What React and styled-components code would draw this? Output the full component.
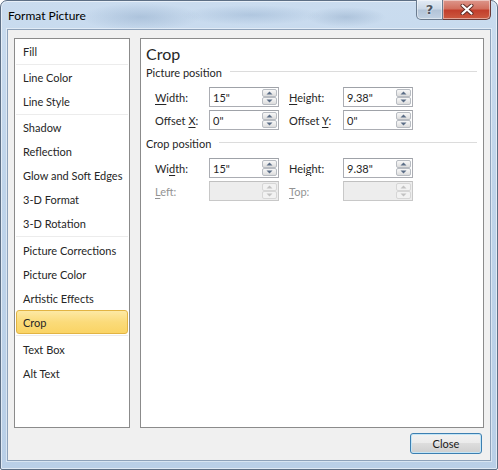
import styled, { createGlobalStyle } from 'styled-components';

const GlobalStyle = createGlobalStyle`
  html, body {
    margin: 0;
    padding: 0;
  }
  body {
    width: 498px;
    height: 470px;
    overflow: hidden;
    background: #fff;
    font-family: Lato, "Liberation Sans", sans-serif;
    font-size: 11px;
    color: #262626;
  }
`;

const Window = styled.div`
  box-sizing: border-box;
  width: 498px;
  height: 470px;
  display: flex;
  flex-direction: column;
  padding: 0 6px 8px 6px;
  border: 1px solid #5d6f85;
  border-radius: 7px 7px 2px 2px;
  background:
    radial-gradient(ellipse 60px 14px at 140px 16px, rgba(120, 150, 185, 0.35), transparent),
    radial-gradient(ellipse 70px 10px at 250px 14px, rgba(130, 160, 195, 0.35), transparent),
    radial-gradient(ellipse 40px 10px at 345px 16px, rgba(110, 140, 175, 0.3), transparent),
    linear-gradient(to bottom, #cadcef 0%, #bfd4ea 40%, #b9cfe7 100%);
  box-shadow: inset 0 0 0 1px rgba(255, 255, 255, 0.55);
`;

const TitleBar = styled.div`
  height: 28px;
  display: flex;
  align-items: flex-start;
  flex: none;
`;

const Title = styled.div`
  padding: 7px 0 0 1px;
  line-height: 16px;
  font-size: 12px;
  color: #000;
  flex: 1;
`;

const CaptionButtons = styled.div`
  display: flex;
  margin-top: -1px;
`;

const CaptionButton = styled.div`
  box-sizing: border-box;
  height: 20px;
  width: ${(p) => (p.$close ? '48px' : '27px')};
  display: flex;
  align-items: center;
  justify-content: center;
  border: 1px solid ${(p) => (p.$close ? '#6b3a37' : '#6a7b8f')};
  border-top: none;
  border-left: ${(p) => (p.$close ? 'none' : '1px solid #6a7b8f')};
  border-radius: ${(p) => (p.$close ? '0 0 5px 0' : '0 0 0 5px')};
  background: ${(p) =>
    p.$close
      ? 'linear-gradient(to bottom, #dd978c 0%, #d2705f 45%, #c23f2c 55%, #cc5a40 100%)'
      : 'linear-gradient(to bottom, #e3ebf4 0%, #ccd9e7 45%, #b3c4d8 55%, #c2d2e3 100%)'};
  box-shadow: inset 0 0 0 1px rgba(255, 255, 255, 0.45);
  font-family: "DejaVu Sans", sans-serif;
  font-size: 13px;
  font-weight: bold;
  color: #4f5762;
  text-shadow: 0 0 2px #fff;
`;

const Client = styled.div`
  flex: 1;
  display: flex;
  flex-direction: column;
  padding: 8px 6px 6px 6px;
  border: 1px solid #8ea2ba;
  background: #f0f0f0;
  box-shadow: 0 0 0 1px rgba(255, 255, 255, 0.45);
`;

const Body = styled.div`
  height: 390px;
  flex: none;
  display: flex;
  gap: 10px;
`;

const CategoryList = styled.div`
  box-sizing: border-box;
  width: 116px;
  flex: none;
  border: 1px solid #8b8b8b;
  background: #fff;
  display: flex;
  flex-direction: column;
`;

const Category = styled.div`
  box-sizing: border-box;
  height: 24px;
  margin: 0 1px;
  padding: 1px 0 0 6px;
  display: flex;
  align-items: center;
  white-space: nowrap;
  border-radius: 3px;
  border: 1px solid ${(p) => (p.$active ? '#e2b443' : 'transparent')};
  background: ${(p) =>
    p.$active ? 'linear-gradient(to bottom, #fde9a5 0%, #fbdb7a 50%, #fad465 100%)' : 'transparent'};
`;

const Divider = styled.div`
  height: ${(p) => p.$h}px;
  display: flex;
  align-items: center;
  margin: 0 1px;
  &::after {
    content: '';
    flex: 1;
    height: 1px;
    background: #ececec;
  }
`;

const Pane = styled.div`
  box-sizing: border-box;
  flex: 1;
  border: 1px solid #8b8b8b;
  background: #fff;
  padding: 5px 5px 0 5px;
  display: flex;
  flex-direction: column;
`;

const PaneTitle = styled.div`
  font-size: 16px;
  line-height: 20px;
`;

const GroupTitle = styled.div`
  margin-top: ${(p) => p.$mt}px;
  display: flex;
  align-items: center;
  gap: 8px;
  line-height: 15px;
  padding-right: 1px;
  &::after {
    content: '';
    flex: 1;
    height: 1px;
    margin-top: -2px;
    background: #dcdcdc;
  }
`;

const Fields = styled.div`
  margin-top: 7px;
  padding-left: 9px;
  display: flex;
  flex-direction: column;
  gap: 3px;
`;

const Row = styled.div`
  height: 20px;
  display: flex;
  gap: 10px;
`;

const Field = styled.div`
  display: flex;
  align-items: center;
`;

const Label = styled.label`
  width: 54px;
  color: ${(p) => (p.$disabled ? '#939393' : '#262626')};
`;

const Key = styled.span`
  text-decoration: underline;
  text-underline-offset: 2px;
`;

const SpinBox = styled.div`
  box-sizing: border-box;
  width: 70px;
  height: 20px;
  display: flex;
  padding: 1px;
  border: 1px solid ${(p) => (p.$disabled ? '#c8c8c8' : '#abadb3')};
  border-top-color: ${(p) => (p.$disabled ? '#c0c0c0' : '#9fa2a8')};
  background: ${(p) => (p.$disabled ? '#ededed' : '#fff')};
`;

const Value = styled.div`
  flex: 1;
  padding-left: 2px;
  display: flex;
  align-items: center;
`;

const Spinner = styled.div`
  width: 15px;
  display: flex;
  flex-direction: column;
`;

const SpinButton = styled.div`
  box-sizing: border-box;
  flex: 1;
  display: flex;
  align-items: center;
  justify-content: center;
  border: 1px solid ${(p) => (p.$disabled ? '#d6d6d6' : '#b8bcc2')};
  border-radius: 2px;
  background: ${(p) =>
    p.$disabled ? '#f2f2f2' : 'linear-gradient(to bottom, #f7f7f7 0%, #ebebeb 50%, #dcdcdc 100%)'};
`;

const Footer = styled.div`
  margin-top: 5px;
  padding-right: 2px;
  display: flex;
  justify-content: flex-end;
`;

const Button = styled.button`
  box-sizing: border-box;
  width: 72px;
  height: 21px;
  padding: 0;
  border: 1px solid #3c7fb1;
  border-radius: 3px;
  background: linear-gradient(to bottom, #f2f2f2 0%, #ebebeb 49%, #dddddd 50%, #cfcfcf 100%);
  box-shadow: inset 0 0 0 1px #c4e5f6;
  font-family: Lato, "Liberation Sans", sans-serif;
  font-size: 11px;
  color: #1a1a1a;
`;

const Arrow = ({ up, disabled }) => (
  <svg width="7" height="4" viewBox="0 0 7 4">
    <path
      d={up ? 'M0.5 3.5 L3.5 0.5 L6.5 3.5 Z' : 'M0.5 0.5 L3.5 3.5 L6.5 0.5 Z'}
      fill={disabled ? '#c2c2c2' : '#5a6d86'}
    />
  </svg>
);

const CloseGlyph = () => (
  <svg width="14" height="11" viewBox="0 0 14 11">
    <path d="M2.5 1.5 L11.5 9.5 M11.5 1.5 L2.5 9.5" stroke="#5a2a24" strokeWidth="4" strokeLinecap="round" />
    <path d="M2.5 1.5 L11.5 9.5 M11.5 1.5 L2.5 9.5" stroke="#fff" strokeWidth="2.2" strokeLinecap="round" />
  </svg>
);

const SpinInput = ({ value, disabled }) => (
  <SpinBox $disabled={disabled}>
    <Value>{value}</Value>
    <Spinner>
      <SpinButton $disabled={disabled}>
        <Arrow up disabled={disabled} />
      </SpinButton>
      <SpinButton $disabled={disabled}>
        <Arrow disabled={disabled} />
      </SpinButton>
    </Spinner>
  </SpinBox>
);

const categories = [
  { items: ['Fill'], gap: 2 },
  { items: ['Line Color', 'Line Style'], gap: 2 },
  { items: ['Shadow', 'Reflection', 'Glow and Soft Edges', '3-D Format', '3-D Rotation'], gap: 3 },
  { items: ['Picture Corrections', 'Picture Color', 'Artistic Effects', 'Crop'], gap: 3 },
  { items: ['Text Box', 'Alt Text'] },
];

// label text split around its access key: [before, key, after]
const FieldLabel = ({ parts, disabled }) => (
  <Label $disabled={disabled}>
    {parts[0]}
    <Key>{parts[1]}</Key>
    {parts[2]}
  </Label>
);

const pictureRows = [
  [
    { parts: ['', 'W', 'idth:'], value: '15"' },
    { parts: ['', 'H', 'eight:'], value: '9.38"' },
  ],
  [
    { parts: ['Offset ', 'X', ':'], value: '0"' },
    { parts: ['Offset ', 'Y', ':'], value: '0"' },
  ],
];

const cropRows = [
  [
    { parts: ['Wi', 'd', 'th:'], value: '15"' },
    { parts: ['Hei', 'g', 'ht:'], value: '9.38"' },
  ],
  [
    { parts: ['', 'L', 'eft:'], value: '', disabled: true },
    { parts: ['', 'T', 'op:'], value: '', disabled: true },
  ],
];

const FieldRows = ({ rows }) => (
  <Fields>
    {rows.map((row, i) => (
      <Row key={i}>
        {row.map((f, j) => (
          <Field key={j}>
            <FieldLabel parts={f.parts} disabled={f.disabled} />
            <SpinInput value={f.value} disabled={f.disabled} />
          </Field>
        ))}
      </Row>
    ))}
  </Fields>
);

const App = () => {
  return (
    <>
      <GlobalStyle />
      <Window>
        <TitleBar>
          <Title>Format Picture</Title>
          <CaptionButtons>
            <CaptionButton>?</CaptionButton>
            <CaptionButton $close>
              <CloseGlyph />
            </CaptionButton>
          </CaptionButtons>
        </TitleBar>
        <Client>
          <Body>
            <CategoryList>
              {categories.map((group, i) => (
                <div key={i}>
                  {group.items.map((name) => (
                    <Category key={name} $active={name === 'Crop'}>
                      {name}
                    </Category>
                  ))}
                  {group.gap && <Divider $h={group.gap} />}
                </div>
              ))}
            </CategoryList>
            <Pane>
              <PaneTitle>Crop</PaneTitle>
              <GroupTitle $mt={1}>Picture position</GroupTitle>
              <FieldRows rows={pictureRows} />
              <GroupTitle $mt={6}>Crop position</GroupTitle>
              <FieldRows rows={cropRows} />
            </Pane>
          </Body>
          <Footer>
            <Button>Close</Button>
          </Footer>
        </Client>
      </Window>
    </>
  );
};

export default App;
